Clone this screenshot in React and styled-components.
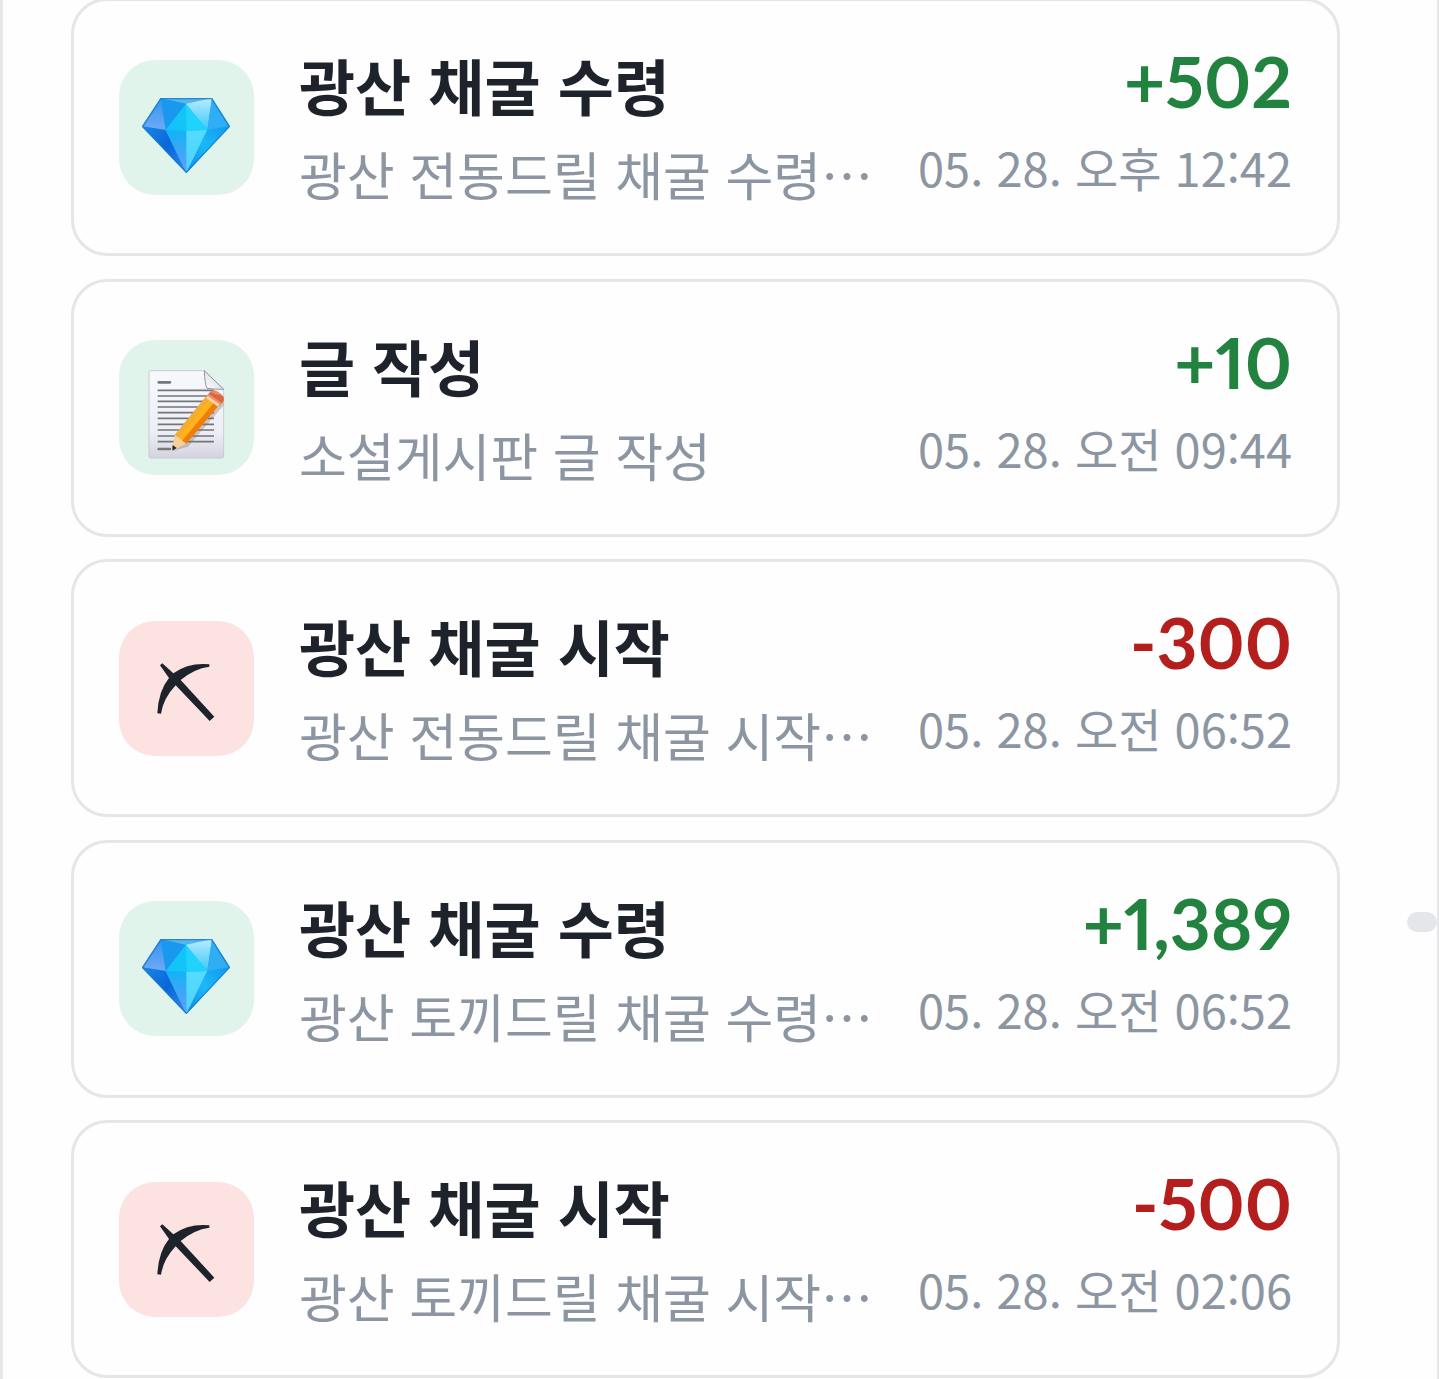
import React from 'react';
import styled, { createGlobalStyle } from 'styled-components';

const history = [
    { id: 1, icon: 'gem', title: '광산 채굴 수령', memo: '광산 전동드릴 채굴 수령…', amount: 502, date: '05. 28. 오후 12:42' },
    { id: 2, icon: 'memo', title: '글 작성', memo: '소설게시판 글 작성', amount: 10, date: '05. 28. 오전 09:44' },
    { id: 3, icon: 'pick', title: '광산 채굴 시작', memo: '광산 전동드릴 채굴 시작…', amount: -300, date: '05. 28. 오전 06:52' },
    { id: 4, icon: 'gem', title: '광산 채굴 수령', memo: '광산 토끼드릴 채굴 수령…', amount: 1389, date: '05. 28. 오전 06:52' },
    { id: 5, icon: 'pick', title: '광산 채굴 시작', memo: '광산 토끼드릴 채굴 시작…', amount: -500, date: '05. 28. 오전 02:06' },
];

const formatAmount = amount => (amount > 0 ? '+' : '') + amount.toLocaleString('en-US');

function GemIcon() {
    return (
        <svg viewBox="27 27 405 405" aria-hidden="true">
            <defs>
                <linearGradient id="gemLeft" x1="0" y1="0" x2="1" y2="1">
                    <stop offset="0" stopColor="#1a86e8" />
                    <stop offset="0.5" stopColor="#0966d8" />
                    <stop offset="1" stopColor="#2f8cf0" />
                </linearGradient>
                <linearGradient id="gemCenter" x1="0" y1="0" x2="0" y2="1">
                    <stop offset="0" stopColor="#10b4f5" />
                    <stop offset="1" stopColor="#6a9af8" />
                </linearGradient>
                <linearGradient id="gemBright" x1="0" y1="0" x2="0" y2="1">
                    <stop offset="0" stopColor="#55dcff" />
                    <stop offset="1" stopColor="#4fd0fb" />
                </linearGradient>
                <linearGradient id="gemRight" x1="1" y1="0" x2="0" y2="1">
                    <stop offset="0" stopColor="#1296ee" />
                    <stop offset="0.5" stopColor="#19baf9" />
                    <stop offset="1" stopColor="#1486e4" />
                </linearGradient>
                <linearGradient id="gemShine" x1="0" y1="0" x2="0" y2="1">
                    <stop offset="0" stopColor="#b8ecfd" />
                    <stop offset="1" stopColor="#38cafb" />
                </linearGradient>
                <linearGradient id="gemCorner" x1="0" y1="0" x2="0" y2="1">
                    <stop offset="0" stopColor="#3494ee" />
                    <stop offset="1" stopColor="#70a9f7" />
                </linearGradient>
            </defs>
            <path d="M152 141H306L360 226L229 366L96 226Z" fill="#20a7f2" />
            <path d="M152 141L96 226L167 237Z" fill="url(#gemCorner)" />
            <path d="M152 141L228 158L167 237Z" fill="#1899ee" />
            <path d="M152 141H306L228 158Z" fill="#55b5ee" />
            <path d="M228 158L167 237L229 240Z" fill="#12c4f7" />
            <path d="M228 158L292 237L229 240Z" fill="#20d3fc" />
            <path d="M228 158L306 141L292 237Z" fill="url(#gemShine)" />
            <path d="M306 141L360 226L292 237Z" fill="#31adf5" />
            <path d="M96 226L167 237L229 366Z" fill="url(#gemLeft)" />
            <path d="M167 237L229 240V366Z" fill="url(#gemCenter)" />
            <path d="M229 240L292 237L229 366Z" fill="url(#gemBright)" />
            <path d="M360 226L292 237L229 366Z" fill="url(#gemRight)" />
            <path d="M153 143H305L358 227L229 364L98 227Z" fill="none" stroke="#1878c8" strokeWidth="4" strokeLinejoin="round" opacity="0.75" />
        </svg>
    );
}

function MemoIcon() {
    return (
        <svg viewBox="27 30 405 405" aria-hidden="true">
            <defs>
                <linearGradient id="paper" x1="0" y1="0" x2="0" y2="1">
                    <stop offset="0" stopColor="#f8f9fd" />
                    <stop offset="0.7" stopColor="#eeeff5" />
                    <stop offset="1" stopColor="#d2d3de" />
                </linearGradient>
                <linearGradient id="fold" x1="0" y1="1" x2="1" y2="0">
                    <stop offset="0" stopColor="#ffffff" />
                    <stop offset="1" stopColor="#cdced6" />
                </linearGradient>
            </defs>
            <path d="M123 122H283L341 178V378Q341 384 335 384H123Q117 384 117 378V128Q117 122 123 122Z" fill="url(#paper)" stroke="#c8cbd3" strokeWidth="3" />
            <path d="M146 157H180M146 357H180" stroke="#74777d" strokeWidth="8" strokeLinecap="round" />
            <path d="M143 181H312M143 198H312M143 214H312M143 231H312M143 248H312M143 265H312M143 283H312M143 300H312M143 318H312M143 335H312" stroke="#73767d" strokeWidth="5" />
            <path d="M283 122L341 178Q310 178 291 175Q284 160 283 122Z" fill="url(#fold)" stroke="#92959d" strokeWidth="3" strokeLinejoin="round" />
            <path d="M341 226L234 350L190 362L228 338L341 202Z" fill="#85705f" opacity="0.35" />
            <path d="M195 314L292 195L330 222L228 341Z" fill="#f79a13" />
            <path d="M195 314L292 195L303 202L205 322Z" fill="#f4ac35" />
            <path d="M205 322L303 202L317 212L217 332Z" fill="#ffb31b" />
            <path d="M217 332L317 212L330 222L228 341Z" fill="#ee7d0a" />
            <path d="M195 314L228 341Q210 349 189 361Q187 343 195 314Z" fill="#f7cf98" />
            <path d="M188 345L200 354L188 362Q186 354 188 345Z" fill="#30251f" />
            <path d="M289 200L300 186Q309 178 322 185Q336 192 341 201V213L327 229Z" fill="#db6640" />
            <path d="M300 186Q309 178 322 185Q336 192 341 201Q330 193 316 193Z" fill="#ed8a63" />
            <path d="M287 202L296 191L334 218L325 230Z" fill="#ef9361" />
            <path d="M288 204L293 198L329 223L324 230Z" fill="#f8d2b4" />
        </svg>
    );
}

function PickIcon() {
    return (
        <svg viewBox="27 30 405 405" aria-hidden="true">
            <path d="M150 163L157 157L190 187Q236 154 298 160V167Q252 173 212 207L313 317L299 330L197 223Q160 262 153 308L142 307Q145 240 177 201Z" fill="#1e222b" />
        </svg>
    );
}

const icons = { gem: GemIcon, memo: MemoIcon, pick: PickIcon };

function HistoryCard({ item }) {
    const Icon = icons[item.icon];
    const minus = item.amount < 0;
    return (
        <Card>
            <IconBox $minus={minus}><Icon /></IconBox>
            <Info>
                <Title>{item.title}</Title>
                <Memo>{item.memo}</Memo>
            </Info>
            <Side>
                <Amount $minus={minus}>{formatAmount(item.amount)}</Amount>
                <DateText>{item.date}</DateText>
            </Side>
        </Card>
    );
}

export default function App() {
    return (
        <>
            <GlobalStyle />
            <Page lang="ko">
                <List>
                    {history.map(item => <HistoryCard key={item.id} item={item} />)}
                </List>
                <ScrollThumb />
            </Page>
        </>
    );
}

const GlobalStyle = createGlobalStyle`
    * {
        box-sizing: border-box;
    }
    body {
        margin: 0;
        background: #fefefe;
        color: #1e222b;
        font-family: "Noto Sans CJK KR", sans-serif;
    }
    h2, p {
        margin: 0;
    }
`;

const Page = styled.main`
    min-height: 100vh;
    overflow: hidden;
    padding: 0 97px 0 68px;
    border-left: 3px solid #e5e6e9;
    border-right: 2px solid #e5e6e9;
`;

const List = styled.ul`
    display: flex;
    flex-direction: column;
    justify-content: space-between;
    gap: 22px;
    min-height: calc(100vh + 1px);
    margin: -2px 0 0;
    padding: 0;
    list-style: none;
`;

const Card = styled.li`
    display: flex;
    align-items: center;
    gap: 45px;
    padding: 45px;
    border: 3px solid #e5e6e9;
    border-radius: 36px;
    background: #fefefe;
`;

const IconBox = styled.div`
    flex: none;
    width: 135px;
    height: 135px;
    border-radius: 36px;
    background: ${props => (props.$minus ? '#fce2e1' : '#e0f4eb')};
    svg {
        display: block;
        width: 100%;
    }
`;

const Info = styled.div`
    display: flex;
    flex: 1;
    flex-direction: column;
    gap: 16px;
    min-width: 0;
    white-space: nowrap;
`;

const Title = styled.h2`
    font-size: 61px;
    font-weight: 700;
    line-height: 78px;
`;

const Memo = styled.p`
    font-size: 52px;
    line-height: 68px;
    color: #8c95a2;
`;

const Side = styled.div`
    display: flex;
    flex: none;
    flex-direction: column;
    align-self: flex-start;
    gap: 16px;
    text-align: right;
    white-space: nowrap;
`;

const Amount = styled.strong`
    font-family: Lato, sans-serif;
    font-size: 71px;
    font-weight: 700;
    font-variant-numeric: proportional-nums;
    line-height: 70px;
    color: ${props => (props.$minus ? '#b41f1d' : '#22823f')};
`;

const DateText = styled.time`
    font-size: 47px;
    line-height: 70px;
    color: #8c95a2;
`;

const ScrollThumb = styled.div`
    position: fixed;
    top: 912px;
    right: 2px;
    width: 30px;
    height: 20px;
    border-radius: 10px;
    background: #e4e6ea;
`;
